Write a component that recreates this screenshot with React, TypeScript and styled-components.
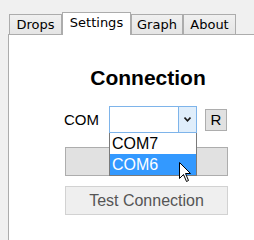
import React from "react";
import styled, { createGlobalStyle } from "styled-components";

const GlobalStyle = createGlobalStyle`
  html, body {
    margin: 0;
    padding: 0;
    background: #f0f0f0;
  }
  body {
    font-family: "Liberation Sans", Arial, sans-serif;
  }
`;

const Window = styled.div`
  position: relative;
  width: 254px;
  height: 240px;
  overflow: hidden;
  background: #f0f0f0;
`;

const TabStrip = styled.div`
  display: flex;
  align-items: flex-end;
  height: 34px;
  padding-left: 9px;
  box-sizing: border-box;
`;

const Tab = styled.div<{ $active?: boolean; $width: number }>`
  position: relative;
  box-sizing: border-box;
  width: ${(p) => p.$width}px;
  height: ${(p) => (p.$active ? 23 : 20)}px;
  margin-bottom: ${(p) => (p.$active ? -1 : 0)}px;
  z-index: ${(p) => (p.$active ? 2 : 1)};
  padding-top: 2px;
  border: 1px solid #acacac;
  border-bottom: none;
  background: ${(p) =>
    p.$active ? "#ffffff" : "linear-gradient(#f0f0f0, #e5e5e5)"};
  font-family: "DejaVu Sans", Verdana, sans-serif;
  font-size: 13px;
  line-height: 15px;
  color: #000;
  text-align: center;
`;

const Panel = styled.div`
  margin-left: 8px;
  height: 206px;
  border-top: 1px solid #acacac;
  border-left: 1px solid #acacac;
  background: #ffffff;
  padding-left: 56px;
`;

const Content = styled.div`
  display: flex;
  flex-direction: column;
  width: 163px;
`;

const Heading = styled.div`
  margin-top: 31px;
  padding-left: 3px;
  font-size: 21px;
  font-weight: bold;
  line-height: 24px;
  text-align: center;
  color: #000;
`;

const PortRow = styled.div`
  display: flex;
  align-items: center;
  margin-top: 16px;
  margin-left: -1px;
  height: 27px;
`;

const Label = styled.span`
  font-size: 15px;
  color: #000;
`;

const SelectWrap = styled.div`
  position: relative;
  margin-left: 10px;
  width: 88px;
  height: 27px;
`;

const SelectBox = styled.div`
  display: flex;
  justify-content: flex-end;
  box-sizing: border-box;
  height: 100%;
  border: 1px solid #7eb4ea;
  background: #fff;
`;

const SelectArrow = styled.div`
  display: flex;
  align-items: center;
  justify-content: center;
  width: 17px;
  border-left: 1px solid #7eb4ea;
  background: #e0eefb;
`;

const DropList = styled.div`
  position: absolute;
  left: 0;
  top: 100%;
  z-index: 5;
  box-sizing: border-box;
  width: 88px;
  border: 1px solid #7a7a7a;
  border-top: none;
  background: #fff;
`;

const Option = styled.div<{ $selected?: boolean }>`
  height: 21px;
  padding-left: 2px;
  font-size: 16px;
  line-height: 21px;
  color: ${(p) => (p.$selected ? "#fff" : "#000")};
  background: ${(p) => (p.$selected ? "#3399ff" : "transparent")};
`;

const SmallButton = styled.button`
  margin-left: 8px;
  box-sizing: border-box;
  width: 22px;
  height: 22px;
  padding: 0;
  border: 1px solid #adadad;
  background: #e1e1e1;
  font-family: "Liberation Sans", Arial, sans-serif;
  font-size: 15px;
  color: #000;
`;

const WideButton = styled.button<{ $gap: number }>`
  box-sizing: border-box;
  width: 163px;
  height: 29px;
  margin-top: ${(p) => p.$gap}px;
  padding: 0;
  border: 1px solid ${(p) => (p.disabled ? "#d2d2d2" : "#adadad")};
  background: ${(p) => (p.disabled ? "#efefef" : "#e1e1e1")};
  font-family: "Liberation Sans", Arial, sans-serif;
  font-size: 16px;
  color: #555;
`;

const Cursor = styled.svg`
  position: absolute;
  left: 179px;
  top: 162px;
  z-index: 10;
`;

const tabs = [
  { label: "Drops", width: 53 },
  { label: "Settings", width: 69, active: true },
  { label: "Graph", width: 52 },
  { label: "About", width: 53 },
];

const App: React.FC = () => {
  return (
    <Window>
      <GlobalStyle />
      <TabStrip>
        {tabs.map((t) => (
          <Tab key={t.label} $active={t.active} $width={t.width}>
            {t.label}
          </Tab>
        ))}
      </TabStrip>
      <Panel>
        <Content>
          <Heading>Connection</Heading>
          <PortRow>
            <Label>COM</Label>
            <SelectWrap>
              <SelectBox>
                <SelectArrow>
                  <svg width="7" height="5" viewBox="0 0 7 5">
                    <path d="M0.5 0.5 L3.5 3.8 L6.5 0.5" fill="none" stroke="#1a1a1a" strokeWidth="1.6" />
                  </svg>
                </SelectArrow>
              </SelectBox>
              <DropList>
                <Option>COM7</Option>
                <Option $selected>COM6</Option>
              </DropList>
            </SelectWrap>
            <SmallButton type="button">R</SmallButton>
          </PortRow>
          <WideButton type="button" $gap={14} />
          <WideButton type="button" $gap={10} disabled>
            Test Connection
          </WideButton>
        </Content>
      </Panel>
      <Cursor width="13" height="21" viewBox="0 0 13 21">
        <path
          d="M0.5 0.5 L0.5 16.5 L4.5 12.5 L7.5 19.5 L9.5 18.5 L6.5 11.5 L11.5 11.5 Z"
          fill="#fff"
          stroke="#000"
          strokeWidth="1"
        />
      </Cursor>
    </Window>
  );
};

export default App;
